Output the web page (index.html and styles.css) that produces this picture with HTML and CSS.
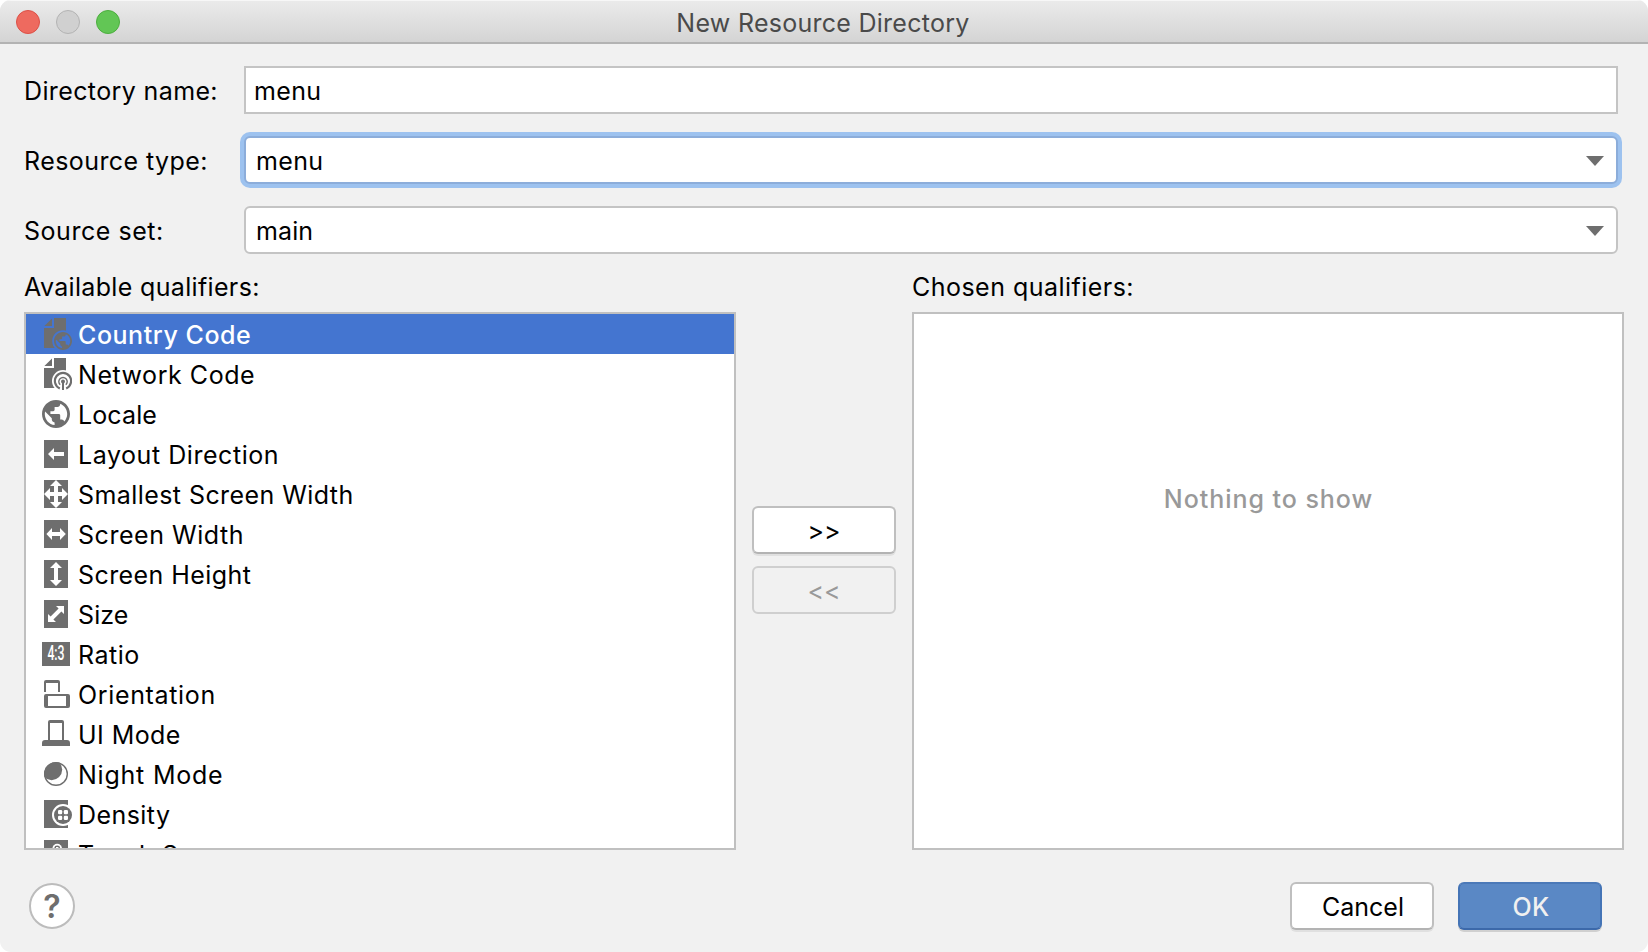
FILE: index.html
```html
<!DOCTYPE html>
<html lang="en">
<head>
<meta charset="utf-8">
<title>New Resource Directory</title>
<link rel="stylesheet" href="styles.css">
</head>
<body>
<div class="window">
  <header class="titlebar">
    <div class="lights"><span class="light close"></span><span class="light minimize"></span><span class="light zoom"></span></div>
    <h1 class="title">New Resource Directory</h1>
  </header>

  <div class="form">
    <label class="label t38">Directory name:</label>
    <div class="field text-field t34">menu</div>
    <label class="label t43">Resource type:</label>
    <div class="field combo focused t34"><span>menu</span><svg class="arrow" viewBox="0 0 18 10"><path d="M0 0H18L9 10Z"/></svg></div>
    <label class="label t54">Source set:</label>
    <div class="field combo t11"><span>main</span><svg class="arrow" viewBox="0 0 18 10"><path d="M0 0H18L9 10Z"/></svg></div>
  </div>

  <div class="panels">
    <section class="panel">
      <h2 class="panel-label t34">Available qualifiers:</h2>
      <ul class="list">
        <li class="row selected t55">
          <svg class="icon" viewBox="0 0 16 16"><path d="M6 .2V4H2.2ZM7 0H13V15H2V5H7Z"/><circle class="gap" cx="11.5" cy="11.5" r="5.4"/><path transform="translate(6.1 6.1) scale(.45)" d="M12 2C6.48 2 2 6.48 2 12s4.480 10 10 10 10-4.480 10-10S17.520 2 12 2zm-1 17.930c-3.950-.490-7-3.850-7-7.930 0-.620.080-1.210.210-1.790L9 15v1c0 1.100.900 2 2 2v1.930zm6.900-2.540c-.260-.810-1-1.390-1.900-1.390h-1v-3c0-.550-.450-1-1-1H8v-2h2c.550 0 1-.450 1-1V7h2c1.100 0 2-.900 2-2v-.410c2.930 1.190 5 4.060 5 7.410 0 2.080-.800 3.970-2.100 5.390z"/></svg>
          <span>Country Code</span></li>
        <li class="row t54">
          <svg class="icon" viewBox="0 0 16 16"><path d="M6 .2V4H2.2ZM7 0H13V15H2V5H7Z"/><circle class="gap" cx="11.500" cy="11.500" r="5.500"/><path class="line" d="M9.900 15.200A4.050 4.050 0 1 1 13.100 15.200" stroke-width="1.100"/><path class="line" d="M10.100 13.400A2.100 2.100 0 1 1 12.900 13.400" stroke-width=".7"/><circle cx="11.500" cy="11.700" r="1"/><path d="M11 11.700H12V16H11Z"/></svg>
          <span>Network Code</span></li>
        <li class="row t11">
          <svg class="icon" viewBox="0 0 16 16"><path transform="translate(-.4 -.4) scale(.7)" d="M12 2C6.48 2 2 6.48 2 12s4.480 10 10 10 10-4.480 10-10S17.520 2 12 2zm-1 17.930c-3.950-.490-7-3.850-7-7.930 0-.620.080-1.210.210-1.790L9 15v1c0 1.100.900 2 2 2v1.930zm6.900-2.540c-.260-.810-1-1.390-1.900-1.390h-1v-3c0-.550-.450-1-1-1H8v-2h2c.550 0 1-.450 1-1V7h2c1.100 0 2-.900 2-2v-.410c2.930 1.190 5 4.060 5 7.410 0 2.080-.800 3.970-2.100 5.390z"/></svg>
          <span>Locale</span></li>
        <li class="row t55">
          <svg class="icon" viewBox="0 0 16 16"><path d="M2 1H14V15H2Z"/><path class="cut" d="M4 8L7 5V7H12V9H7V11Z"/></svg>
          <span>Layout Direction</span></li>
        <li class="row t43">
          <svg class="icon" viewBox="0 0 16 16"><path d="M2 1H14V15H2Z"/><path class="cut" d="M8 1L11 4H9V7H11V5L14 8L11 11V9H9V12H11L8 15L5 12H7V9H5V11L2 8L5 5V7H7V4H5Z"/></svg>
          <span>Smallest Screen Width</span></li>
        <li class="row t54">
          <svg class="icon" viewBox="0 0 16 16"><path d="M2 1H14V15H2Z"/><path class="cut" d="M3.200 8L6 5V7H10V5L12.900 8L10 11V9H6V11Z"/></svg>
          <span>Screen Width</span></li>
        <li class="row t43">
          <svg class="icon" viewBox="0 0 16 16"><path d="M2 1H14V15H2Z"/><path class="cut" d="M8 2L11 5H9V11H11L8 14L5 11H7V5H5Z"/></svg>
          <span>Screen Height</span></li>
        <li class="row t11">
          <svg class="icon" viewBox="0 0 16 16"><path d="M2 1H14V15H2Z"/><path class="cut" d="M12 4V8L10.700 6.700L6.700 10.700L8 12H4V8L5.300 9.300L9.300 5.300L8 4Z"/></svg>
          <span>Size</span></li>
        <li class="row t52">
          <svg class="icon" viewBox="0 0 16 16"><path d="M1 2H15V14H1Z"/><text class="ratio" x="3.700" y="11" textLength="8.600" lengthAdjust="spacingAndGlyphs">4:3</text></svg>
          <span>Ratio</span></li>
        <li class="row t66">
          <svg class="icon" viewBox="0 0 16 16"><path d="M2 7V2Q2 1 3 1H9Q10 1 10 2V7H9V2.500H3V7Z"/><path fill-rule="evenodd" d="M3 8H14Q15 8 15 9V14Q15 15 14 15H3Q2 15 2 14V9Q2 8 3 8ZM4 9V14H13V9Z"/></svg>
          <span>Orientation</span></li>
        <li class="row t43">
          <svg class="icon" viewBox="0 0 16 16"><path fill-rule="evenodd" d="M4 11V2Q4 1 5 1H11Q12 1 12 2V11H13.500Q15 11 15 12.500V14H1V12.500Q1 11 2.500 11ZM5 2.500V11H11V2.500Z"/></svg>
          <span>UI Mode</span></li>
        <li class="row t78">
          <svg class="icon" viewBox="0 0 16 16"><clipPath id="moon"><circle cx="8" cy="8" r="6"/></clipPath><circle class="line" stroke-width=".7" cx="8" cy="8" r="5.650"/><circle clip-path="url(#moon)" cx="5.800" cy="5.800" r="5.300"/></svg>
          <span>Night Mode</span></li>
        <li class="row t43">
          <svg class="icon" viewBox="0 0 16 16"><path d="M2 1H14V15H2Z"/><circle class="cut" cx="11.500" cy="8.500" r="5.500"/><circle cx="11.500" cy="8.500" r="4.500"/><g class="cut"><rect x="9" y="6" width="2.100" height="2.100" rx=".6"/><rect x="11.900" y="6" width="2.100" height="2.100" rx=".6"/><rect x="9" y="8.900" width="2.100" height="2.100" rx=".6"/><rect x="11.900" y="8.900" width="2.100" height="2.100" rx=".6"/></g></svg>
          <span>Density</span></li>
        <li class="row t66">
          <svg class="icon" viewBox="0 0 16 16"><path d="M2 1H14V15H2Z"/><circle class="cut" cx="8.600" cy="5.300" r="2.400"/><circle cx="8.600" cy="5.300" r="1.500"/><path class="cut" d="M8 4.500H9.200V10H8Z"/></svg>
          <span>Touch Screen</span></li>
      </ul>
    </section>

    <div class="transfer">
      <button class="button">&gt;&gt;</button>
      <button class="button disabled">&lt;&lt;</button>
    </div>

    <section class="panel">
      <h2 class="panel-label t47">Chosen qualifiers:</h2>
      <div class="list empty">Nothing to show</div>
    </section>
  </div>

  <footer class="footer">
    <button class="help">?</button>
    <div class="actions">
      <button class="button wide">Cancel</button>
      <button class="button wide primary">OK</button>
    </div>
  </footer>
</div>
</body>
</html>
```
FILE: styles.css
```css
* { box-sizing: border-box; }
body { margin: 0; background: #fff; }
.window {
  width: 1648px; height: 952px;
  display: flex; flex-direction: column;
  background: #f1f1f1; color: #000;
  border-radius: 11px; overflow: hidden;
  font: 400 25px/38px Inter, "Liberation Sans", sans-serif;
}
h1, h2, ul { margin: 0; padding: 0; font: inherit; list-style: none; }

.titlebar {
  height: 44px; flex: none;
  display: grid; grid-template-columns: 140px 1fr 140px; align-items: center;
  background: linear-gradient(#ebebeb, #d4d4d4);
  border-bottom: 2px solid #b3b3b3;
  box-shadow: inset 0 1px #f7f7f7;
}
.lights { display: flex; gap: 16px; padding: 2px 0 0 16px; }
.light { width: 24px; height: 24px; border-radius: 50%; border: 1px solid; }
.close { background: #ee6a5f; border-color: #dc5047; }
.minimize { background: #d0d0d0; border-color: #b3b3b3; }
.zoom { background: #62c655; border-color: #4cae3e; }
.title { color: #4a4a4a; text-align: center; letter-spacing: .27px; padding: 3px 2px 0 0; line-height: 38px; }

.form {
  display: grid; grid-template-columns: 220px 1fr; grid-auto-rows: 48px; row-gap: 22px;
  padding: 22px 30px 0 24px;
}
.label { padding-top: 1px; line-height: 48px; }
.field {
  background: #fff; border: 2px solid #c4c4c4;
  padding: 1px 12px 0 8px; line-height: 44px;
}
.combo {
  display: flex; justify-content: space-between; align-items: flex-start;
  border-radius: 6px; padding-left: 10px;
}
.focused { border-color: #8cadda; box-shadow: 0 0 0 4px #9dc2ef; }
.arrow { width: 18px; height: 10px; margin-top: 17px; fill: #6e6e6e; }

.panels { display: grid; grid-template-columns: 712px 1fr 712px; padding: 0 24px; }
.panel-label { padding: 14px 0 6px; }
.list { height: 538px; background: #fff; border: 2px solid #c0c0c0; overflow: hidden; }
.row { display: flex; gap: 6px; height: 40px; padding: 2px 0 0 14px; }
.selected { background: #4475d0; color: #fff; font-weight: 500; }
.selected .gap { fill: #4475d0; }
.icon { width: 32px; height: 32px; margin-top: 2px; fill: #6e6e6e; flex: none; }
.gap, .cut { fill: #fff; }
.line { fill: none; stroke: #6e6e6e; }
.ratio { fill: #fff; font: 500 9.8px Roboto, sans-serif; letter-spacing: 0; }
.empty { color: #999; font-weight: 500; text-align: center; letter-spacing: .95px; padding: 166px 0 0 1px; }

.transfer { display: flex; flex-direction: column; align-items: center; gap: 12px; padding-top: 252px; }
.button {
  width: 144px; height: 48px; margin: 0; padding: 2px 0 0;
  font: inherit; line-height: 42px; color: #000;
  background: #fff; border: 2px solid #bfbfbf; border-bottom-color: #b3b3b3; border-radius: 6px;
  box-shadow: 0 2px #e0e0e0;
}
.wide { padding-left: 2px; }
.disabled { background: #f1f1f1; color: #999; border-color: #cfcfcf; box-shadow: none; }
.primary { background: #5a88c5; color: #f0f0f0; border-color: #4b79b8 #4474b6 #3c69aa; font-weight: 500; letter-spacing: .3px; box-shadow: 0 2px #d0d0d0; }

.footer { display: flex; justify-content: space-between; padding: 32px 46px 0 29px; }
.help {
  width: 46px; height: 46px; margin-top: 1px; padding: 1px 0 0;
  background: #fff; border: 2px solid #bcbcbc; border-radius: 50%;
  font: 600 32px/42px Inter, sans-serif; color: #6e6e6e;
}
.actions { display: flex; gap: 24px; }

/* Tracking steps */
.t11 { letter-spacing: .11px; }
.t34 { letter-spacing: .34px; }
.t38 { letter-spacing: .38px; }
.t43 { letter-spacing: .43px; }
.t47 { letter-spacing: .47px; }
.t52 { letter-spacing: .52px; }
.t54 { letter-spacing: .54px; }
.t55 { letter-spacing: .55px; }
.t66 { letter-spacing: .66px; }
.t78 { letter-spacing: .78px; }
```
